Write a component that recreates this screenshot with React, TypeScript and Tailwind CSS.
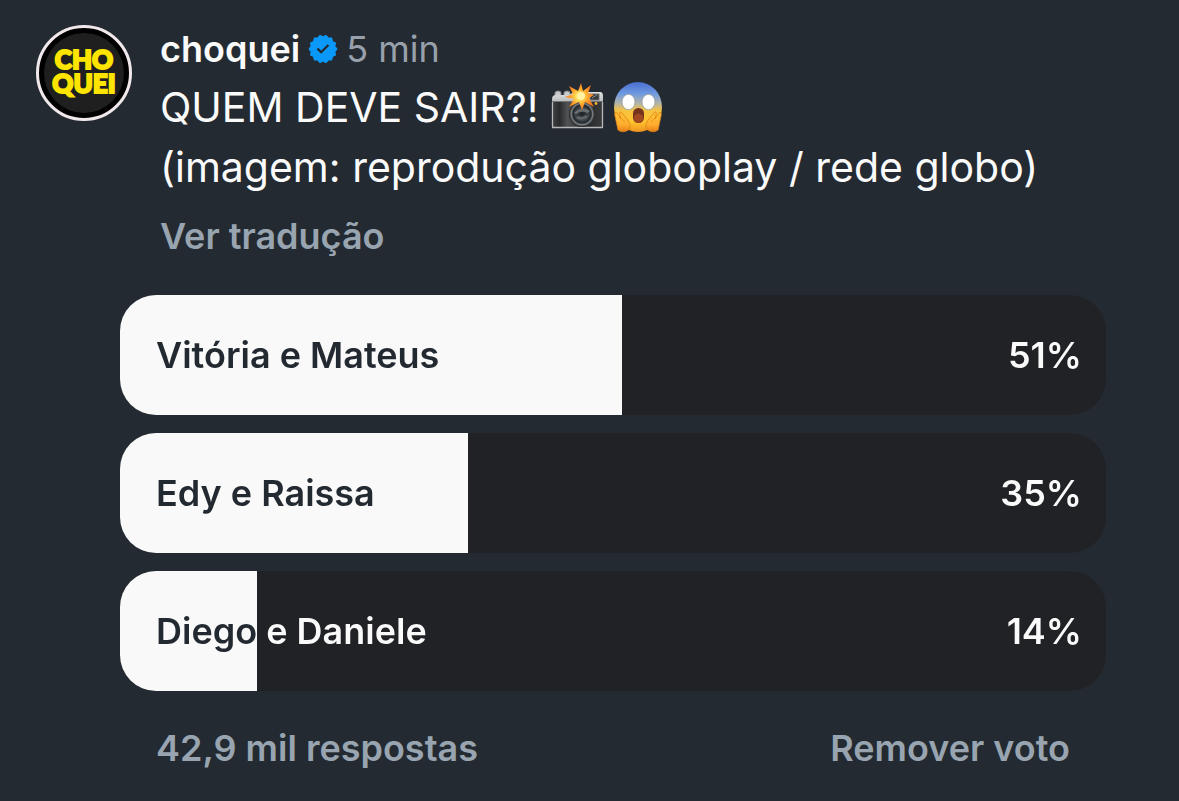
type Option = { label: string; percent: number; share: number };

const options: Option[] = [
  { label: "Vitória e Mateus", percent: 51, share: 50.9 },
  { label: "Edy e Raissa", percent: 35, share: 35.3 },
  { label: "Diego e Daniele", percent: 14, share: 13.9 },
];

function split(filled: string, rest: string, share: number) {
  return `linear-gradient(to right, ${filled} ${share}%, ${rest} ${share}%)`;
}

function Avatar() {
  return (
    <a
      href="#choquei"
      className="flex size-24 shrink-0 items-center justify-center rounded-full border-3 border-[#f1e8ec] bg-black"
    >
      <span className="flex size-20 flex-col items-center justify-center rounded-full bg-[#1f1f1f] pb-1 text-center font-['Lato',sans-serif] text-[26px] leading-6 font-black text-[#fde500] [-webkit-text-stroke:2px_#fde500]">
        <span>CHO</span>
        <span>QUEI</span>
      </span>
    </a>
  );
}

function VerifiedBadge() {
  const count = 14;
  const points = Array.from({ length: count * 2 }, (_, i) => {
    const r = i % 2 === 0 ? 13.6 : 11.8;
    const a = (Math.PI * i) / count - Math.PI / 2 + Math.PI / count;
    return `${(15 + r * Math.cos(a)).toFixed(2)},${(15 + r * Math.sin(a)).toFixed(2)}`;
  }).join(" ");
  return (
    <svg viewBox="0 0 30 30" className="size-[30px]" role="img" aria-label="Verificado">
      <polygon points={points} fill="#0a99fb" stroke="#0a99fb" strokeWidth="1.6" strokeLinejoin="round" />
      <path d="M9.4 14.6 L13.2 18.2 L20.4 11" fill="none" stroke="#232930" strokeWidth="2.3" />
    </svg>
  );
}

function CameraFlash() {
  return (
    <svg viewBox="0 0 54 50" className="h-[50px] w-[54px]" role="img" aria-label="Câmera com flash">
      <defs>
        <linearGradient id="cam-top" x1="0" y1="0" x2="0" y2="1">
          <stop offset="0" stopColor="#e4e5e6" />
          <stop offset="0.3" stopColor="#b3b5b7" />
          <stop offset="1" stopColor="#a6a8aa" />
        </linearGradient>
        <linearGradient id="cam-body" x1="0" y1="0" x2="1" y2="0">
          <stop offset="0" stopColor="#404143" />
          <stop offset="0.15" stopColor="#2a2b2d" />
          <stop offset="0.3" stopColor="#515254" />
          <stop offset="0.65" stopColor="#242527" />
          <stop offset="1" stopColor="#3b3c3e" />
        </linearGradient>
        <radialGradient id="cam-lens">
          <stop offset="0" stopColor="#1b2024" />
          <stop offset="0.5" stopColor="#3f474b" />
          <stop offset="0.7" stopColor="#22272b" />
          <stop offset="0.82" stopColor="#7d8183" />
          <stop offset="0.9" stopColor="#4c4f51" />
          <stop offset="1" stopColor="#222426" />
        </radialGradient>
        <radialGradient id="cam-flash">
          <stop offset="0" stopColor="#fffbe0" />
          <stop offset="0.25" stopColor="#ffdf57" />
          <stop offset="0.6" stopColor="#ffa42b" />
          <stop offset="1" stopColor="#f47721" />
        </radialGradient>
      </defs>
      <path d="M4 15 V11 Q4 9 7 9 Q10 9 10 11 V15 M13 15 V11 Q13 9 16 9 Q19 9 19 11 V15" fill="#c8cacb" stroke="#85888b" />
      <path d="M1 17 Q1 13 5 13 H18 L23 10 H49 Q52 10 52 14 V46 H1Z" fill="url(#cam-top)" />
      <path d="M1 20 H52 V45 H1Z" fill="url(#cam-body)" />
      <path d="M1 19.5 H52" stroke="#737679" />
      <path d="M1 45.5 H52 M1.5 20 V45 M51.5 20 V45" stroke="#b5b7b9" strokeWidth="1.3" />
      <rect x="39" y="12" width="9" height="6" fill="#34383c" stroke="#747779" />
      <path d="M41 16 L46 13" stroke="#8e9294" />
      <circle cx="31" cy="32" r="13" fill="url(#cam-lens)" />
      <path d="M23 31 Q31 23 39 29 L36 31 Q31 28 25 32Z" fill="#9ca2a5" opacity=".5" />
      <path d="M25 36 Q31 40 37 35 L35 33 Q31 36 27 34Z" fill="#858c90" opacity=".5" />
      <circle cx="45" cy="21.5" r="1.4" fill="#f3b532" />
      <path d="M30 1 L32 9 L40 3 L37 11 L43 13 L38 16 L43 25 L34 20 L31 28 L28 20 L18 25 L23 17 L14 15 L22 12 L18 4 L27 9Z" fill="url(#cam-flash)" />
      <circle cx="30" cy="14" r="4" fill="#fff2a4" />
    </svg>
  );
}

function ScreamingFace() {
  return (
    <svg viewBox="0 0 50 52" className="h-[52px] w-[50px]" role="img" aria-label="Rosto gritando de medo">
      <defs>
        <linearGradient id="face" x1="0" y1="0" x2="0" y2="1">
          <stop offset="0" stopColor="#476ed0" />
          <stop offset="0.24" stopColor="#709be1" />
          <stop offset="0.43" stopColor="#b3b4a5" />
          <stop offset="0.57" stopColor="#f5c243" />
          <stop offset="0.8" stopColor="#ffc32d" />
          <stop offset="1" stopColor="#ee9120" />
        </linearGradient>
        <linearGradient id="hand" x1="0" y1="0" x2="0" y2="1">
          <stop offset="0" stopColor="#ffc438" />
          <stop offset="0.65" stopColor="#ffac2e" />
          <stop offset="1" stopColor="#e67d17" />
        </linearGradient>
      </defs>
      <ellipse cx="25" cy="26" rx="24" ry="25" fill="url(#face)" />
      <ellipse cx="15.5" cy="21" rx="6.5" ry="7.7" fill="#fff" stroke="#8e969a" strokeWidth=".7" />
      <ellipse cx="35.5" cy="21" rx="6.5" ry="7.7" fill="#fff" stroke="#8e969a" strokeWidth=".7" />
      <rect x="20" y="27" width="11" height="15" rx="5.4" fill="#74331d" />
      <path d="M21 35 Q25 30 30 35 V37 Q30 42 25.5 42 Q21 42 21 37Z" fill="#9f4822" />
      <path d="M4 32 Q1 30 2 35 L5 49 Q10 53 17 48 Q18 43 15 39 L9 32 Q6 29 7 34 L8 38Z" fill="url(#hand)" stroke="#dd8517" strokeWidth=".8" />
      <path d="M46 32 Q49 30 48 35 L45 49 Q40 53 33 48 Q32 43 35 39 L41 32 Q44 29 43 34 L42 38Z" fill="url(#hand)" stroke="#dd8517" strokeWidth=".8" />
      <path d="M8 37 L12 41 M42 37 L38 41" stroke="#df8c1d" strokeWidth=".8" />
    </svg>
  );
}

function PollOption({ label, percent, share }: Option) {
  return (
    <button
      type="button"
      className="block w-full overflow-hidden rounded-[36px]"
      style={{ backgroundImage: split("#f9f9f9", "#212225", share) }}
    >
      <span
        className="flex h-[120px] items-center justify-between bg-clip-text pr-6 pl-9 text-4xl font-semibold text-transparent"
        style={{ backgroundImage: split("#232930", "#fafafa", share) }}
      >
        <span>{label}</span>
        <span>{percent}%</span>
      </span>
    </button>
  );
}

export default function App() {
  return (
    <main className="min-h-screen bg-[#242a31] pt-[25px] pr-[73px] pb-6 pl-9 font-['Inter',sans-serif] text-[#fafafa]">
      <header className="flex gap-7">
        <Avatar />
        <div className="min-w-0 flex-1">
          <div className="flex h-12 items-center gap-2 text-4xl">
            <a href="#choquei" className="font-semibold">choquei</a>
            <VerifiedBadge />
            <time className="text-[#98a1ab]">5 min</time>
          </div>
          <p className="mt-1 flex h-[60px] items-center gap-2 text-[41px] leading-[60px]">
            <span className="mr-1">QUEM DEVE SAIR?!</span>
            <CameraFlash />
            <ScreamingFace />
          </p>
          <p className="text-[41px] leading-[60px]">(imagem: reprodução globoplay / rede globo)</p>
          <button type="button" className="mt-3 block text-4xl leading-[54px] font-semibold text-[#98a5b0]">
            Ver tradução
          </button>
        </div>
      </header>
      <section aria-label="Enquete" className="mt-8 ml-[84px] flex flex-col gap-[18px]">
        {options.map((option) => (
          <PollOption key={option.label} {...option} />
        ))}
      </section>
      <footer className="mt-[37px] ml-[84px] flex justify-between pr-9 pl-9 text-4xl font-semibold text-[#98a5b0]">
        <span>42,9 mil respostas</span>
        <button type="button">Remover voto</button>
      </footer>
    </main>
  );
}
